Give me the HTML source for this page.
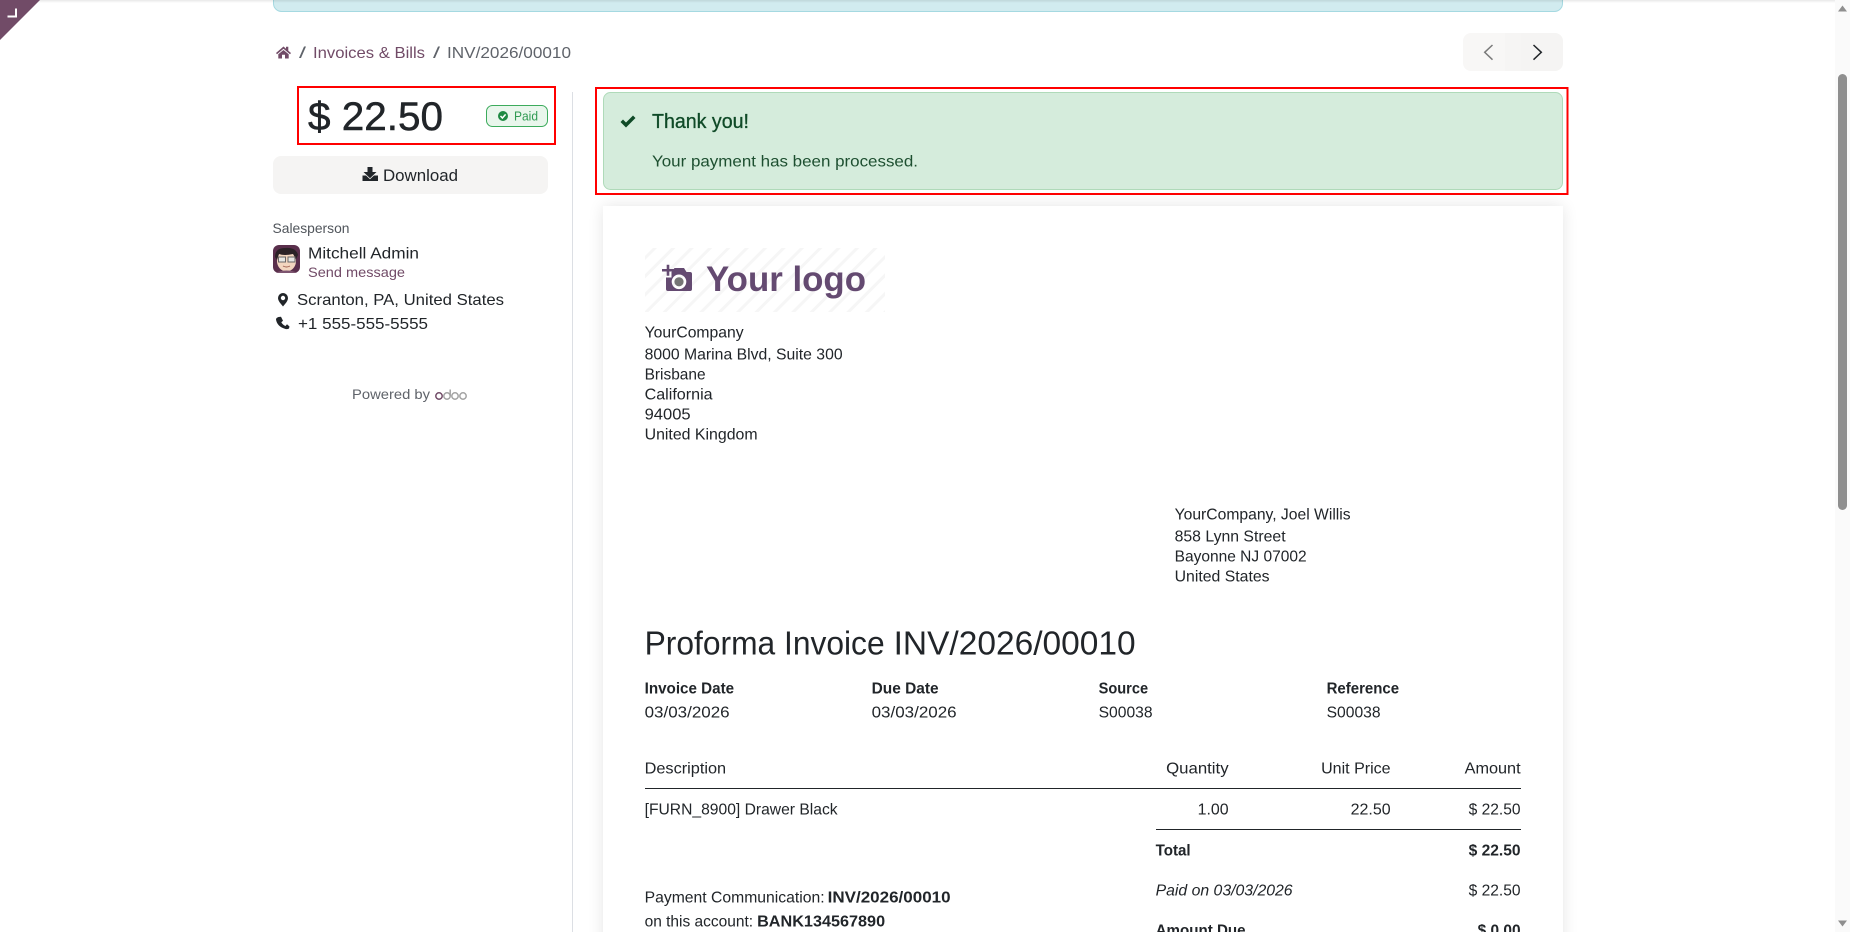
<!DOCTYPE html>
<html lang="en">
<head>
<meta charset="utf-8">
<title>INV/2026/00010</title>
<style>
html,body{margin:0;padding:0;width:1850px;height:932px;overflow:hidden;background:#fff}
svg{display:block;position:absolute;left:0;top:0}
text{font-family:"Liberation Sans",sans-serif;fill:#212529;white-space:pre}
.b{font-weight:700}
.i{font-style:italic}
.d{font-size:16px;fill:#212529}
.u{font-size:16px}
.p{fill:#714b67}
.g{fill:#5f636a}
</style>
</head>
<body>
<svg width="1850" height="932" viewBox="0 0 1850 932" xmlns="http://www.w3.org/2000/svg">
<defs>
<linearGradient id="top" x1="0" y1="0" x2="0" y2="1"><stop offset="0" stop-color="#000" stop-opacity=".09"/><stop offset="1" stop-color="#000" stop-opacity="0"/></linearGradient>
<filter id="sh" x="-5%" y="-5%" width="110%" height="110%"><feGaussianBlur stdDeviation="8"/></filter>
<pattern id="st" width="13" height="13" patternUnits="userSpaceOnUse" patternTransform="rotate(45)"><rect width="13" height="13" fill="#fff"/><rect x="0" y="0" width="3" height="13" fill="#f6f6f6"/></pattern>
<clipPath id="av"><rect x="273" y="245" width="27" height="28" rx="6"/></clipPath>
</defs>

<!-- top info alert -->
<rect x="273.5" y="-10" width="1289" height="21.5" rx="8" fill="#d1ebef" stroke="#a5d9e1"/>
<rect x="0" y="0" width="1835" height="3" fill="url(#top)"/>

<!-- editor ribbon -->
<path d="M0 0H40L0 40Z" fill="#714b67"/>
<path d="M16 8.5V16.5H7.500" fill="none" stroke="#fff" stroke-width="2"/>

<!-- breadcrumb -->
<path d="M276 53L283.500 46.500L286 48.700V46.800H288.300V50.700L291 53L290 54.200L283.500 48.700L277 54.200Z" fill="#714b67"/>
<path d="M278.300 54.300L283.500 50L288.700 54.300V58.500H285V54.800H282V58.500H278.300Z" fill="#714b67"/>
<text x="299" y="58" class="u g" textLength="7" lengthAdjust="spacingAndGlyphs">/</text>
<text x="313" y="58" class="u p" textLength="112" lengthAdjust="spacingAndGlyphs">Invoices &amp; Bills</text>
<text x="433" y="58" class="u g" textLength="7" lengthAdjust="spacingAndGlyphs">/</text>
<text x="447" y="58" class="u g" textLength="124" lengthAdjust="spacingAndGlyphs">INV/2026/00010</text>

<!-- pager -->
<rect x="1463" y="33" width="50" height="38" rx="8" fill="#f8f7f6"/>
<rect x="1513" y="33" width="50" height="38" rx="8" fill="#f5f4f3"/>
<rect x="1505" y="33" width="16" height="38" fill="#f6f5f4"/>
<path d="M1492.500 45L1484.700 52.300L1492.500 59.700" fill="none" stroke="#7a7a7a" stroke-width="1.500"/>
<path d="M1533.500 45L1541.300 52.300L1533.500 59.700" fill="none" stroke="#212529" stroke-width="1.500"/>

<!-- amount -->
<rect x="298" y="87" width="257" height="57" fill="none" stroke="#f00" stroke-width="2"/>
<text x="308" y="130" font-size="40" stroke="#212529" stroke-width=".5" textLength="135" lengthAdjust="spacingAndGlyphs">$ 22.50</text>
<rect x="486.500" y="105.500" width="61" height="21" rx="6" fill="#e9f6ec" stroke="#3cab5c"/>
<circle cx="503" cy="116" r="5" fill="#1f8a43"/>
<path d="M500.500 116L502.400 118L505.600 114.400" fill="none" stroke="#fff" stroke-width="1.500"/>
<text x="514" y="120.500" font-size="12.500" style="fill:#2f9a52" textLength="24" lengthAdjust="spacingAndGlyphs">Paid</text>

<!-- download -->
<rect x="273" y="156" width="275" height="38" rx="8" fill="#f5f4f3"/>
<path d="M367.500 167H372.500V172H376.500L370 178.300L363.500 172H367.500Z" fill="#212529"/>
<path d="M362.500 175.500H366L370 179.300L374 175.500H378V181H362.500Z" fill="#212529"/>
<text x="383" y="181" font-size="17" textLength="75" lengthAdjust="spacingAndGlyphs">Download</text>

<!-- sidebar -->
<text x="272.500" y="233" font-size="14" class="g" style="fill:#50555b" textLength="77" lengthAdjust="spacingAndGlyphs">Salesperson</text>
<g clip-path="url(#av)">
<rect x="273" y="245" width="27" height="28" fill="#5a2f4c"/>
<path d="M277 262Q277 256 279 254H294Q296 256 296 262Q295 270 286.500 272Q278 270 277 262Z" fill="#f3d6bf"/>
<path d="M275 257Q275 248 285 248Q296 247 298 255L296 259L293 254Q284 256 279 254L277 260Z" fill="#2b2226"/>
<rect x="278.500" y="257" width="7" height="5" fill="#e7e7e3" stroke="#6a6564"/>
<rect x="288" y="257" width="7" height="5" fill="#e7e7e3" stroke="#6a6564"/>
<path d="M283 266Q286.500 268 290 266" fill="none" stroke="#a0604f"/>
<path d="M275 273Q286.500 268 298 273Z" fill="#7d5570"/>
</g>
<text x="308" y="258.500" class="u" textLength="111" lengthAdjust="spacingAndGlyphs">Mitchell Admin</text>
<text x="308" y="277" font-size="14" class="p" textLength="97" lengthAdjust="spacingAndGlyphs">Send message</text>
<path fill-rule="evenodd" d="M283 293A5 5 0 0 1 288 298C288 301 285 304 283 306.500C281 304 278 301 278 298A5 5 0 0 1 283 293ZM283 295.800A2.200 2.200 0 1 0 283 300.200A2.200 2.200 0 1 0 283 295.800Z" fill="#212529"/>
<text x="297" y="305" class="u" textLength="207" lengthAdjust="spacingAndGlyphs">Scranton, PA, United States</text>
<path d="M278.500 317L281 316.800L283 320.800L281.300 322.300Q282.800 325 285.500 326L287 324.300L289.500 326.500L289 328.500Q287.500 329.500 285.500 329Q277 326.500 276 319.500Q276 317.800 278.500 317Z" fill="#212529"/>
<text x="298" y="329" class="u" textLength="130" lengthAdjust="spacingAndGlyphs">+1 555-555-5555</text>
<text x="352" y="399" font-size="14" class="g" textLength="78" lengthAdjust="spacingAndGlyphs">Powered by</text>
<circle cx="439" cy="396" r="3.200" fill="none" stroke="#714b67" stroke-width="1.500"/>
<circle cx="447" cy="396" r="3.200" fill="none" stroke="#a3a3a3" stroke-width="1.500"/>
<path d="M450.200 389.500V396" fill="none" stroke="#a3a3a3" stroke-width="1.500"/>
<circle cx="455" cy="396" r="3.200" fill="none" stroke="#a3a3a3" stroke-width="1.500"/>
<circle cx="463" cy="396" r="3.200" fill="none" stroke="#a3a3a3" stroke-width="1.500"/>
<rect x="572" y="92" width="1" height="840" fill="#dcdfe4"/>

<!-- green alert -->
<rect x="596" y="88" width="971.500" height="106" fill="none" stroke="#f00" stroke-width="2"/>
<rect x="603.500" y="92.500" width="959" height="97" rx="7" fill="#d5ecdc" stroke="#afdab9"/>
<path d="M620.500 122L623 119.500L626 122.500L633 115.500L635.500 118L626 127.500Z" fill="#0f4a27"/>
<text x="652" y="128" font-size="20" stroke="#0f4a27" stroke-width=".3" style="fill:#0f4a27" textLength="97" lengthAdjust="spacingAndGlyphs">Thank you!</text>
<text x="652" y="166.500" class="u" style="fill:#1d4f30" textLength="266" lengthAdjust="spacingAndGlyphs">Your payment has been processed.</text>

<!-- invoice card -->
<rect x="603" y="206" width="960" height="760" fill="#000" opacity=".1" filter="url(#sh)"/>
<rect x="603" y="206" width="960" height="740" fill="#fff"/>

<!-- logo -->
<rect x="645" y="248" width="240" height="64" fill="url(#st)"/>
<path d="M666.700 264.700H669.300V269H674V271.500H669.300V275.700H666.700V271.500H662V269H666.700Z" fill="#644a71"/>
<path fill-rule="evenodd" d="M671.500 272L674.500 268H684L686.500 272H690Q692 272 692 274V289Q692 291 690 291H668Q666 291 666 289V277.500H671.500ZM679 274.500A7.300 7.300 0 1 0 679 289.100A7.300 7.300 0 1 0 679 274.500Z" fill="#644a71"/>
<circle cx="679" cy="281.800" r="4.600" fill="#757575"/>
<text x="706" y="291" font-size="35" class="b" style="fill:#644a71" textLength="160" lengthAdjust="spacingAndGlyphs">Your logo</text>

<g transform="translate(-.4 -.6)">
<!-- company address -->
<text x="645" y="338" class="d" textLength="99" lengthAdjust="spacingAndGlyphs">YourCompany</text>
<text x="645" y="360" class="d" textLength="198" lengthAdjust="spacingAndGlyphs">8000 Marina Blvd, Suite 300</text>
<text x="645" y="380" class="d" textLength="61" lengthAdjust="spacingAndGlyphs">Brisbane</text>
<text x="645" y="400" class="d" textLength="68" lengthAdjust="spacingAndGlyphs">California</text>
<text x="645" y="420" class="d" textLength="46" lengthAdjust="spacingAndGlyphs">94005</text>
<text x="645" y="440" class="d" textLength="113" lengthAdjust="spacingAndGlyphs">United Kingdom</text>

<!-- customer address -->
<text x="1175" y="520" class="d" textLength="176" lengthAdjust="spacingAndGlyphs">YourCompany, Joel Willis</text>
<text x="1175" y="542" class="d" textLength="111" lengthAdjust="spacingAndGlyphs">858 Lynn Street</text>
<text x="1175" y="562" class="d" textLength="132" lengthAdjust="spacingAndGlyphs">Bayonne NJ 07002</text>
<text x="1175" y="582" class="d" textLength="95" lengthAdjust="spacingAndGlyphs">United States</text>

<!-- title -->
<text x="645" y="655" font-size="33" textLength="240" lengthAdjust="spacingAndGlyphs">Proforma Invoice</text>
<text x="894" y="655" font-size="33" textLength="242" lengthAdjust="spacingAndGlyphs">INV/2026/00010</text>

<!-- info -->
<text x="645" y="694" class="d b" textLength="89.500" lengthAdjust="spacingAndGlyphs">Invoice Date</text>
<text x="872" y="694" class="d b" textLength="67" lengthAdjust="spacingAndGlyphs">Due Date</text>
<text x="1099" y="694" class="d b" textLength="49.500" lengthAdjust="spacingAndGlyphs">Source</text>
<text x="1327" y="694" class="d b" textLength="72.500" lengthAdjust="spacingAndGlyphs">Reference</text>
<text x="645" y="718" class="d" textLength="85" lengthAdjust="spacingAndGlyphs">03/03/2026</text>
<text x="872" y="718" class="d" textLength="85" lengthAdjust="spacingAndGlyphs">03/03/2026</text>
<text x="1099" y="718" class="d" textLength="54" lengthAdjust="spacingAndGlyphs">S00038</text>
<text x="1327" y="718" class="d" textLength="54" lengthAdjust="spacingAndGlyphs">S00038</text>

<!-- table -->
<text x="645" y="774" class="d" textLength="81.500" lengthAdjust="spacingAndGlyphs">Description</text>
<text x="1166.500" y="774" class="d" textLength="62.500" lengthAdjust="spacingAndGlyphs">Quantity</text>
<text x="1321.500" y="774" class="d" textLength="69.500" lengthAdjust="spacingAndGlyphs">Unit Price</text>
<text x="1465" y="774" class="d" textLength="56" lengthAdjust="spacingAndGlyphs">Amount</text>
<text x="645" y="815" class="d" textLength="193" lengthAdjust="spacingAndGlyphs">[FURN_8900] Drawer Black</text>
<text x="1198" y="815" class="d" textLength="31" lengthAdjust="spacingAndGlyphs">1.00</text>
<text x="1351" y="815" class="d" textLength="40" lengthAdjust="spacingAndGlyphs">22.50</text>
<text x="1469" y="815" class="d" textLength="52" lengthAdjust="spacingAndGlyphs">$ 22.50</text>
<text x="1156" y="856" class="d b" textLength="35" lengthAdjust="spacingAndGlyphs">Total</text>
<text x="1469" y="856" class="d b" textLength="52" lengthAdjust="spacingAndGlyphs">$ 22.50</text>
<text x="1156" y="896" class="d i" textLength="137" lengthAdjust="spacingAndGlyphs">Paid on 03/03/2026</text>
<text x="1469" y="896" class="d" textLength="52" lengthAdjust="spacingAndGlyphs">$ 22.50</text>
<text x="1156" y="936" class="d b" textLength="90" lengthAdjust="spacingAndGlyphs">Amount Due</text>
<text x="1478" y="936" class="d b" textLength="43" lengthAdjust="spacingAndGlyphs">$ 0.00</text>
<text x="645" y="903" class="d" textLength="180" lengthAdjust="spacingAndGlyphs">Payment Communication:</text>
<text x="828" y="903" class="d b" textLength="123" lengthAdjust="spacingAndGlyphs">INV/2026/00010</text>
<text x="645" y="927" class="d" textLength="108.500" lengthAdjust="spacingAndGlyphs">on this account:</text>
<text x="757.500" y="927" class="d b" textLength="128" lengthAdjust="spacingAndGlyphs">BANK134567890</text>
</g>
<rect x="645" y="788" width="876" height="1" fill="#212529"/>
<rect x="1156" y="829" width="365" height="1" fill="#212529"/>

<!-- scrollbar -->
<rect x="1835" y="0" width="15" height="932" fill="#fafafa"/>
<path d="M1842.500 5.500L1847 11.500H1838Z" fill="#8f8f8f"/>
<rect x="1838" y="74" width="9" height="436" rx="4.500" fill="#8f8f8f"/>
<path d="M1842.500 926.500L1847 920.500H1838Z" fill="#8f8f8f"/>
</svg>
</body>
</html>
